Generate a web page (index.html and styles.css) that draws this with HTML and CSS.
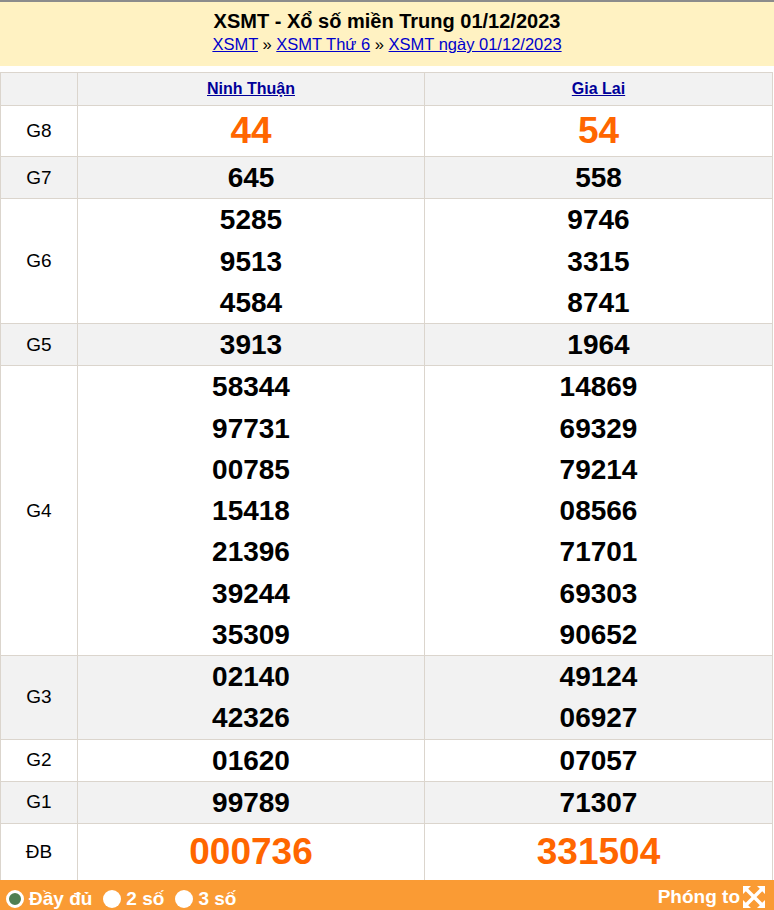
FILE: index.html
```html
<!DOCTYPE html>
<html lang="vi">
<head>
<meta charset="utf-8">
<title>XSMT 01/12/2023</title>
<link rel="stylesheet" href="styles.css">
</head>
<body>
<div class="page">
  <div class="head">
    <h2 class="title">XSMT - Xổ số miền Trung 01/12/2023</h2>
    <div class="crumbs"><a href="#">XSMT</a> » <a href="#">XSMT Thứ 6</a> » <a href="#">XSMT ngày 01/12/2023</a></div>
  </div>
  <table class="kq">
    <colgroup><col class="c1"><col class="c2"><col class="c3"></colgroup>
    <tr class="hd alt"><th></th><th><a href="#">Ninh Thuận</a></th><th><a href="#">Gia Lai</a></th></tr>
    <tr class="g8"><td class="lb">G8</td><td><div class="big">44</div></td><td><div class="big">54</div></td></tr>
    <tr class="alt"><td class="lb">G7</td><td><div class="n">645</div></td><td><div class="n">558</div></td></tr>
    <tr><td class="lb">G6</td><td><div class="n">5285</div><div class="n">9513</div><div class="n">4584</div></td><td><div class="n">9746</div><div class="n">3315</div><div class="n">8741</div></td></tr>
    <tr class="alt"><td class="lb">G5</td><td><div class="n">3913</div></td><td><div class="n">1964</div></td></tr>
    <tr><td class="lb">G4</td><td><div class="n">58344</div><div class="n">97731</div><div class="n">00785</div><div class="n">15418</div><div class="n">21396</div><div class="n">39244</div><div class="n">35309</div></td><td><div class="n">14869</div><div class="n">69329</div><div class="n">79214</div><div class="n">08566</div><div class="n">71701</div><div class="n">69303</div><div class="n">90652</div></td></tr>
    <tr class="alt"><td class="lb">G3</td><td><div class="n">02140</div><div class="n">42326</div></td><td><div class="n">49124</div><div class="n">06927</div></td></tr>
    <tr><td class="lb">G2</td><td><div class="n">01620</div></td><td><div class="n">07057</div></td></tr>
    <tr class="alt"><td class="lb">G1</td><td><div class="n">99789</div></td><td><div class="n">71307</div></td></tr>
    <tr class="db"><td class="lb">ĐB</td><td><div class="big db-n">000736</div></td><td><div class="big db-n">331504</div></td></tr>
  </table>
  <div class="bar">
    <div class="opts">
      <span class="opt"><span class="radio on"></span>Đầy đủ</span>
      <span class="opt"><span class="radio"></span>2 số</span>
      <span class="opt"><span class="radio"></span>3 số</span>
    </div>
    <div class="zoom">Phóng to<svg class="zi" width="24" height="24" viewBox="0 0 24 24"><g fill="#fff"><path d="M1 1h8l-2.8 2.8L12 9.5l5.8-5.7L15 1h8v8l-2.8-2.8L14.5 12l5.7 5.8L23 15v8h-8l2.8-2.8L12 14.5l-5.8 5.7L9 23H1v-8l2.8 2.8L9.5 12 3.8 6.2 1 9z"/></g></svg></div>
  </div>
</div>
</body>
</html>
```
FILE: styles.css
```css
html, body {
  margin: 0;
  padding: 0;
  background: #fff;
}
body {
  font-family: Arial, "Liberation Sans", sans-serif;
  color: #000;
}
.page {
  width: 774px;
}
.head {
  border-top: 2px solid #8c8c8c;
  background: #fff2c2;
  text-align: center;
  height: 66px;
  box-sizing: border-box;
  padding-top: 7px;
}
.title {
  margin: 0;
  font-size: 20px;
  font-weight: bold;
  line-height: 24px;
}
.crumbs {
  font-size: 16.5px;
  line-height: 20px;
  margin-top: 1px;
  color: #000;
}
.crumbs a {
  color: #0000cc;
  text-decoration: underline;
}
.kq {
  margin-top: 6px;
  border-collapse: collapse;
  width: 773px;
  table-layout: fixed;
}
.c1 { width: 77px; }
.c2 { width: 347px; }
.c3 { width: 348px; }
.kq td, .kq th {
  border: 1px solid #dbd5cd;
  padding: 0;
  text-align: center;
  vertical-align: middle;
}
.kq tr.alt td, .kq tr.alt th {
  background: #f2f2f2;
}
.hd th {
  height: 32px;
  font-size: 16px;
  font-weight: bold;
}
.hd a {
  color: #000099;
  text-decoration: underline;
}
.lb {
  font-size: 19px;
  color: #000;
}
.n {
  font-size: 28px;
  font-weight: bold;
  line-height: 41.25px;
}
.big {
  font-size: 37px;
  font-weight: bold;
  color: #ff6600;
  line-height: 50px;
}
.db-n {
  line-height: 56px;
}
.bar {
  background: #fa9b34;
  height: 32px;
  display: flex;
  align-items: center;
  justify-content: space-between;
  padding: 0 8px 0 6px;
  color: #fff;
  font-weight: bold;
  font-size: 19px;
  margin-top: -1px;
}
.opts {
  display: flex;
  align-items: center;
  gap: 11px;
  padding-top: 5px;
}
.opt {
  display: flex;
  align-items: center;
}
.radio {
  width: 18px;
  height: 18px;
  border-radius: 50%;
  background: #fff;
  box-sizing: border-box;
  margin-right: 5px;
}
.radio.on {
  background: #4f7f52;
  border: 3px solid #fff;
}
.zoom {
  display: flex;
  align-items: center;
  padding-top: 2px;
}
.zi {
  margin-left: 2px;
}
```
